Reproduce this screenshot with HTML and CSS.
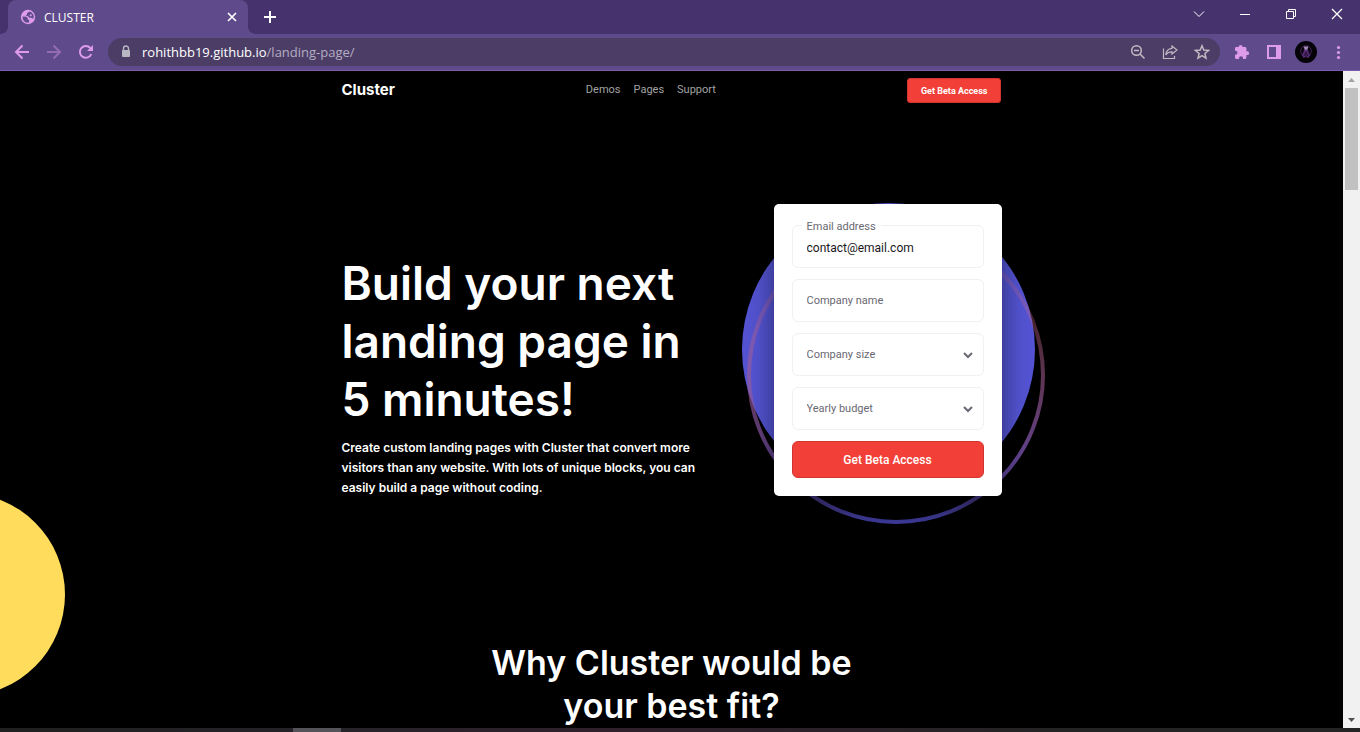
FILE: index.html
```html
<!DOCTYPE html>
<html lang="en">
<head>
<meta charset="utf-8">
<title>CLUSTER</title>
<link rel="stylesheet" href="styles.css">
</head>
<body>
<div class="window">
  <div class="tabstrip">
    <div class="tab">
      <svg class="favicon" width="16" height="16" viewBox="0 0 16 16" aria-hidden="true"><circle cx="8" cy="8" r="7.200" fill="#dd9bea"/><path d="M2.600 7.500L6.300 7.800 7.800 9.300v1.500l1.500.3-.4 2.500C5.300 14.300 2.300 11.300 2.600 7.500zM9.500 2.600L7 4.200v1.600L5.500 6.500 8 7.300l1.500 1.500h1.700l2.300 1c.9-3-.8-6.200-4-7.200z" fill="#5f4b8b"/><path d="M10.500 5l1.500 1-1 1.500-1.500-.7z" fill="#dd9bea"/></svg>
      <span class="tab-title">CLUSTER</span>
      <button class="icon-button" type="button" aria-label="Close tab"><svg width="16" height="16" viewBox="0 0 16 16"><path d="M4 4l8 8M12 4l-8 8" stroke="#fff" stroke-width="1.700" fill="none"/></svg></button>
    </div>
    <button class="icon-button new-tab" type="button" aria-label="New tab"><svg width="16" height="16" viewBox="0 0 16 16"><path d="M8 2v12M2 8h12" stroke="#fff" stroke-width="2" fill="none"/></svg></button>
    <div class="window-controls">
      <button class="icon-button" type="button" aria-label="Search tabs"><svg width="16" height="16" viewBox="0 0 16 16"><path d="M3 5.500l5 5 5-5" stroke="#fff" stroke-width="1" fill="none"/></svg></button>
      <button class="icon-button" type="button" aria-label="Minimize"><svg width="16" height="16" viewBox="0 0 16 16"><path d="M3 8.500h10" stroke="#fff" fill="none"/></svg></button>
      <button class="icon-button" type="button" aria-label="Restore"><svg width="16" height="16" viewBox="0 0 16 16"><path d="M3.500 5.500h7v7h-7zM5.500 5.500v-2h7v7h-2" stroke="#fff" fill="none"/></svg></button>
      <button class="icon-button" type="button" aria-label="Close"><svg width="16" height="16" viewBox="0 0 16 16"><path d="M3 3l10 10M13 3L3 13" stroke="#fff" stroke-width="1.300" fill="none"/></svg></button>
    </div>
  </div>
  <div class="toolbar">
    <div class="nav-buttons">
      <button class="icon-button" type="button" aria-label="Back"><svg width="16" height="16" viewBox="0 0 16 16"><path d="M15 8H2.500M8.500 1.500L2 8l6.500 6.500" stroke="#dd9bea" stroke-width="2" fill="none"/></svg></button>
      <button class="icon-button" type="button" aria-label="Forward"><svg width="16" height="16" viewBox="0 0 16 16"><path d="M1 8h12.500M7.500 1.500L14 8l-6.500 6.500" stroke="#956cb3" stroke-width="2" fill="none"/></svg></button>
      <button class="icon-button" type="button" aria-label="Reload"><svg width="16" height="16" viewBox="0 0 16 16"><path d="M13.300 10A5.900 5.900 0 1 1 12.300 4" stroke="#dd9bea" stroke-width="2" fill="none"/><path d="M15 1v6H9z" fill="#dd9bea"/></svg></button>
    </div>
    <div class="omnibox">
      <svg width="16" height="16" viewBox="0 0 16 16" aria-hidden="true"><rect x="4" y="6" width="8" height="7" rx="1" fill="#b8b8c2"/><path d="M5.500 6.500V4.500a2.500 2.500 0 0 1 5 0v2" stroke="#b8b8c2" stroke-width="1.400" fill="none"/></svg>
      <span class="address"><b>rohithbb19.github.io</b>/landing-page/</span>
      <button class="icon-button" type="button" aria-label="Zoom out"><svg width="16" height="16" viewBox="0 0 16 16"><circle cx="6.500" cy="6.500" r="4.800" stroke="#c0bbc3" stroke-width="1.500" fill="none"/><path d="M4 6.500h5M10 10l4.500 4.500" stroke="#c0bbc3" stroke-width="1.500" fill="none"/></svg></button>
      <button class="icon-button" type="button" aria-label="Share"><svg width="16" height="16" viewBox="0 0 16 16"><path d="M1.500 4.500v10h11V12M10 2l5 4-5 4V7.800C7 7.700 5 8.800 3.800 11 4 7.500 6.200 4.700 10 4.300z" stroke="#c0bbc3" stroke-width="1.200" fill="none"/></svg></button>
      <button class="icon-button" type="button" aria-label="Bookmark this page"><svg width="16" height="16" viewBox="0 0 16 16"><path d="M8 1.800l1.800 4.300 4.700.4-3.600 3 1.100 4.600L8 11.600l-4 2.500 1.100-4.600-3.600-3 4.700-.4z" stroke="#c0bbc3" stroke-width="1.500" fill="none"/></svg></button>
    </div>
    <div class="extensions">
      <button class="icon-button" type="button" aria-label="Extensions"><svg width="16" height="16" viewBox="0 0 16 16"><path d="M13.300 7.300h-.9V4.400c0-.7-.6-1.300-1.300-1.300H8.500V2.800a1.900 1.900 0 0 0-3.800 0v.3H2.300C1.600 3.100 1 3.700 1 4.400v2.400h.5a2 2 0 0 1 0 4H1v2.800c0 .7.600 1.300 1.300 1.300H5v-.6a2 2 0 0 1 4 0v.6h2.100c.7 0 1.300-.6 1.300-1.300V11h.9a1.850 1.850 0 0 0 0-3.700z" fill="#dd9bea"/></svg></button>
      <button class="icon-button" type="button" aria-label="Side panel"><svg width="16" height="16" viewBox="0 0 16 16"><path fill-rule="evenodd" d="M1 1h14v14H1zM3 3v10h7V3z" fill="#dd9bea"/></svg></button>
      <button class="icon-button profile" type="button" aria-label="Profile"><svg width="22" height="22" viewBox="0 0 22 22"><circle cx="11" cy="11" r="11" fill="#050308"/><circle cx="11" cy="10" r="5.300" stroke="#44205c" fill="none"/><path d="M9 8h4l.5 3 2 3.500-1 .5-1 2-2.500-1-2.500 1-1-2-1-.5 2-3.500z" fill="#552c73"/><path d="M11 11l-2 4M11 11l2 4M11 12v4" stroke="#1d0c2a" stroke-width=".8"/><path d="M8.500 5.500h5l-1 2.500-1.500 1-1.500-1z" fill="#a48fb5"/></svg></button>
      <button class="icon-button" type="button" aria-label="Menu"><svg width="16" height="16" viewBox="0 0 16 16"><g fill="#dd9bea"><circle cx="8.500" cy="3.500" r="1.600"/><circle cx="8.500" cy="8.500" r="1.600"/><circle cx="8.500" cy="13.500" r="1.600"/></g></svg></button>
    </div>
  </div>
  <div class="viewport">
    <div class="page">
      <div class="sun"></div>
      <div class="container">
        <header class="site-header">
          <a class="logo" href="#">Cluster</a>
          <nav class="menu"><a href="#">Demos</a><a href="#">Pages</a><a href="#">Support</a></nav>
          <button class="cta" type="button">Get Beta Access</button>
        </header>
        <main>
          <section class="hero">
            <div class="hero-text">
              <h1>Build your next<br>landing page in<br>5 minutes!</h1>
              <p>Create custom landing pages with Cluster that convert more<br>visitors than any website. With lots of unique blocks, you can<br>easily build a page without coding.</p>
            </div>
            <div class="signup">
              <svg class="orbit" width="306" height="324" viewBox="0 0 306 324" aria-hidden="true">
                <defs><linearGradient id="ring" x1="0" y1="0" x2="0" y2="1"><stop offset="0" stop-color="#ff7474" stop-opacity="0"/><stop offset=".5" stop-color="#a85f91" stop-opacity=".55"/><stop offset=".8" stop-color="#7a55ba" stop-opacity=".8"/><stop offset="1" stop-color="#413fa6"/></linearGradient></defs>
                <circle cx="147.500" cy="146.500" r="146.500" fill="#5454d4"/>
                <circle cx="155" cy="172" r="147" fill="none" stroke="url(#ring)" stroke-width="4"/>
              </svg>
              <form class="card">
                <div class="field">
                  <label class="floating" for="email">Email address</label>
                  <input id="email" type="email" value="contact@email.com">
                </div>
                <div class="field"><input type="text" placeholder="Company name" aria-label="Company name"></div>
                <div class="field">
                  <select aria-label="Company size"><option>Company size</option></select>
                  <svg class="chevron" width="10" height="8" viewBox="0 0 10 8" aria-hidden="true"><path d="M1 2l4 4 4-4" stroke="#696871" stroke-width="2" fill="none"/></svg>
                </div>
                <div class="field">
                  <select aria-label="Yearly budget"><option>Yearly budget</option></select>
                  <svg class="chevron" width="10" height="8" viewBox="0 0 10 8" aria-hidden="true"><path d="M1 2l4 4 4-4" stroke="#696871" stroke-width="2" fill="none"/></svg>
                </div>
                <button class="submit" type="button">Get Beta Access</button>
              </form>
            </div>
          </section>
          <h2>Why Cluster would be<br>your best fit?</h2>
        </main>
      </div>
    </div>
    <div class="scrollbar" aria-hidden="true">
      <svg width="17" height="17" viewBox="0 0 17 17"><path d="M5 11l3.500-4 3.500 4z" fill="#a3a3a3"/></svg>
      <div class="thumb"></div>
      <svg width="17" height="17" viewBox="0 0 17 17"><path d="M5 7l3.500 4L12 7z" fill="#505050"/></svg>
    </div>
  </div>
  <div class="taskbar"><div class="task"></div></div>
</div>
</body>
</html>
```
FILE: styles.css
```css
* { box-sizing: border-box; }
body { margin: 0; background: #000; font-family: Inter, "Liberation Sans", sans-serif; }
a { color: inherit; text-decoration: none; }
button, input, select { font: inherit; margin: 0; }
svg { display: block; flex: none; }

.window { display: flex; flex-direction: column; height: 100vh; overflow: hidden; }

.icon-button { display: flex; padding: 0; border: 0; background: none; }

.tabstrip { display: flex; flex: none; align-items: flex-end; height: 34px; padding-left: 8px; background: #46326c; font-family: "Open Sans", sans-serif; }
.tab { position: relative; display: flex; align-items: center; gap: 8px; width: 240px; height: 34px; padding: 0 8px 0 12px; border-radius: 8px 8px 0 0; background: #5f4b8b; color: #fff; font-size: 12px; }
.tab::before, .tab::after { content: ""; position: absolute; bottom: 0; width: 8px; height: 8px; }
.tab::before { left: -8px; background: radial-gradient(circle at 0 0, #46326c 8px, #5f4b8b 8px); }
.tab::after { right: -8px; background: radial-gradient(circle at 100% 0, #46326c 8px, #5f4b8b 8px); }
.tab-title { flex: 1; }
.new-tab { align-self: center; margin-left: 14px; }
.window-controls { display: flex; gap: 30px; align-self: flex-start; margin-left: auto; padding: 6px 15px; }

.toolbar { display: flex; flex: none; align-items: center; height: 37px; padding: 0 14px; background: #5f4b8b; border-bottom: 1px solid #8058a8; }
.nav-buttons { display: flex; gap: 16px; margin-right: 14px; }
.omnibox { display: flex; flex: 1; align-items: center; gap: 16px; height: 28px; padding: 0 10px; border-radius: 14px; background: #4b3d66; }
.address { flex: 1; margin-left: -8px; color: #b4aec2; font-family: "Open Sans", sans-serif; font-size: 13px; }
.address b { color: #fff; font-weight: 400; }
.extensions { display: flex; align-items: center; gap: 16px; margin-left: 14px; }
.profile { margin: 0 -3px; }

.viewport { display: flex; flex: 1; min-height: 0; }
.page { position: relative; flex: 1; overflow: hidden; background: #000; color: #fff; }
.scrollbar { display: flex; flex-direction: column; width: 17px; background: #f1f1f1; }
.thumb { flex: none; height: 102px; margin: 0 2px auto; background: #c1c1c1; }
.sun { position: absolute; top: 422px; left: -138px; width: 203px; height: 203px; border-radius: 50%; background: #ffdc5b; }

.container { position: relative; max-width: 660px; margin: 0 auto; }
.site-header { display: flex; align-items: center; justify-content: space-between; padding: 7px 0; }
.logo { padding-bottom: 2px; font-size: 15px; font-weight: 700; line-height: 22px; }
.menu { display: flex; gap: 13px; padding-bottom: 2px; color: #a3a3a3; font-family: Roboto, sans-serif; font-size: 11px; }
.cta { height: 25px; padding: 0 13px; border: 1px solid #d2352d; border-radius: 3px; background: #f24038; color: #fff; font-family: Roboto, sans-serif; font-size: 9px; font-weight: 700; }

.hero { display: flex; align-items: flex-start; justify-content: space-between; padding: 94px 0 143px; }
.hero-text { padding-top: 50px; white-space: nowrap; }
h1 { margin: 0 0 10px; font-size: 46px; font-weight: 600; line-height: 58px; }
.hero-text p { margin: 0; font-size: 12px; font-weight: 600; line-height: 20px; }
h2 { margin: 0; font-size: 34px; font-weight: 600; line-height: 43px; text-align: center; }

.signup { position: relative; width: 228px; }
.orbit { position: absolute; top: -1px; left: -33px; }
.card { position: relative; display: flex; flex-direction: column; gap: 11px; padding: 21px 18px 18px; border-radius: 5px; background: #fff; box-shadow: 0 16px 28px rgba(0, 0, 0, .5); font-family: Roboto, sans-serif; font-size: 11px; }
.field { position: relative; height: 43px; border: 1px solid #f0f0f5; border-radius: 6px; }
.field input, .field select { width: 100%; height: 100%; padding: 0 14px; border: 0; border-radius: 6px; outline: 0; background: none; color: #696871; appearance: none; }
.field input[type="email"] { padding-top: 3px; color: #19191b; font-size: 12px; }
.field input::placeholder { color: #696871; opacity: 1; }
.floating { position: absolute; top: -6px; left: 9px; padding: 0 5px; background: #fff; color: #696871; line-height: 14px; }
.chevron { position: absolute; top: 17px; right: 10px; pointer-events: none; }
.submit { height: 37px; border: 1px solid #d2352d; border-radius: 6px; background: #f24038; color: #fff; font-size: 12px; font-weight: 500; }

.taskbar { flex: none; height: 4px; padding-left: 293px; background: linear-gradient(90deg, #202020, #262329 25%, #30202c 45%, #242424 80%); }
.task { width: 48px; height: 4px; background: #55535a; }
```
